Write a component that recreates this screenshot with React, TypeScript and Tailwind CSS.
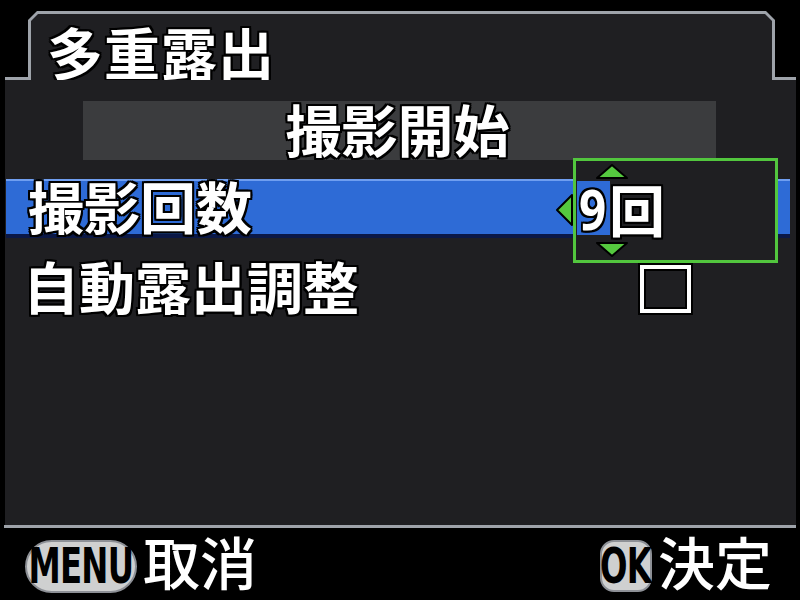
import React from "react";

const outline =
  "[text-shadow:2px_0_0_#000,-2px_0_0_#000,0_2px_0_#000,0_-2px_0_#000,2px_2px_0_#000,-2px_-2px_0_#000,2px_-2px_0_#000,-2px_2px_0_#000]";

function Triangle({ dir }: { dir: "up" | "down" | "left" }) {
  const pts =
    dir === "up"
      ? "17,2 32,15 2,15"
      : dir === "down"
      ? "2,1 32,1 17,14"
      : "17,2 17,32 2,17";
  const size = dir === "left" ? { w: 19, h: 34 } : { w: 34, h: 16 };
  return (
    <svg width={size.w} height={size.h} viewBox={`0 0 ${size.w} ${size.h}`}>
      <polygon points={pts} fill="#55c93f" stroke="#000" strokeWidth="2" strokeLinejoin="round" />
    </svg>
  );
}

export default function App() {
  return (
    <div className="relative w-[800px] h-[600px] bg-black flex flex-col font-['Noto_Sans_CJK_JP',sans-serif] text-white overflow-hidden">
      {/* tab row */}
      <div className="pt-[11px] pl-[5px] w-[796px] flex items-end h-[80px]">
        <div className="w-[23px] h-[3px] bg-[#9ea3aa]" />
        <div className="flex-1 h-[69px] bg-[#9ea3aa] [clip-path:polygon(9px_0,calc(100%-9px)_0,100%_9px,100%_100%,0_100%,0_9px)] pt-[3px] px-[3px]">
          <div className="h-full bg-[#1f1f22] [clip-path:polygon(7px_0,calc(100%-7px)_0,100%_7px,100%_100%,0_100%,0_7px)] pl-[16px] pt-[9px]">
            <span className={`text-[56px] leading-none font-bold tracking-[1px] ${outline}`}>多重露出</span>
          </div>
        </div>
        <div className="w-[21px] h-[3px] bg-[#9ea3aa]" />
      </div>

      {/* body */}
      <div className="ml-[5px] w-[791px] h-[450px] bg-[#1f1f22] flex flex-col">
        <div className="mt-[21px] ml-[78px] w-[633px] h-[59px] bg-[#3b3c3e] flex items-center justify-center pb-[6px] pr-[4px]">
          <span className={`text-[56px] leading-none font-bold ${outline}`}>撮影開始</span>
        </div>
        <div className="mt-[19px] ml-[1px] w-[784px] h-[59px] bg-[#2e6bd6] border-t-2 border-[#6f9ef0] border-b-[4px] border-b-[#0b1846] flex items-center pl-[22px] pb-[6px]">
          <span className={`text-[56px] leading-none font-bold ${outline}`}>撮影回数</span>
        </div>
        <div className="mt-[21px] ml-[1px] w-[784px] h-[59px] flex items-center pl-[17px]">
          <span className={`text-[56px] leading-none font-bold mb-[8px] ${outline}`}>自動露出調整</span>
          <div className="ml-auto mr-[99px] w-[51px] h-[48px] border-[4px] border-white shadow-[0_0_0_2px_#000,inset_0_0_0_2px_#000]" />
        </div>
      </div>
      <div className="ml-[4px] w-[792px] h-[3px] bg-[#9ea3aa]" />

      {/* footer */}
      <div className="flex-1 flex items-start pt-[4px] pl-[25px] pr-[28px]">
        <div className="flex items-center">
          <div className="w-[112px] h-[53px] rounded-full bg-[#cfd0d0] border-2 border-[#8d9096] flex items-center justify-center">
            <span className="inline-block scale-x-[0.72] text-black font-bold text-[50px] leading-none font-['DejaVu_Sans_Condensed',sans-serif] tracking-[-1px]">MENU</span>
          </div>
          <span className="ml-[6px] mb-[11px] text-[57px] leading-none font-medium">取消</span>
        </div>
        <div className="ml-auto flex items-center">
          <div className="w-[52px] h-[52px] mt-[4px] rounded-[14px] bg-[#cfd0d0] border-2 border-[#8d9096] flex items-center justify-center">
            <span className="inline-block scale-x-[0.72] text-black font-bold text-[50px] leading-none font-['DejaVu_Sans_Condensed',sans-serif] tracking-[-1px]">OK</span>
          </div>
          <span className="ml-[6px] mb-[6px] text-[57px] leading-none font-medium">決定</span>
        </div>
      </div>

      {/* value selector overlay */}
      <div className="absolute left-[573px] top-[158px] w-[205px] h-[105px] border-[3px] border-[#52c63e] bg-[#1f1f22]">
        <div className="absolute left-[1px] top-[20px] w-[33px] h-[54px] bg-[#2e6bd6]" />
        <div className="absolute left-[19px] top-[2px] flex">
          <Triangle dir="up" />
        </div>
        <div className="absolute left-[19px] top-[81px] flex">
          <Triangle dir="down" />
        </div>
        <div className="absolute left-[-21px] top-[32px] flex">
          <Triangle dir="left" />
        </div>
        <div className={`absolute left-[3px] top-[19px] flex items-center text-[56px] leading-none font-bold ${outline}`}>
          <span className="inline-block scale-x-[0.85] origin-left font-['Noto_Sans',sans-serif] w-[30px]">9</span>
          <span>回</span>
        </div>
      </div>
    </div>
  );
}
